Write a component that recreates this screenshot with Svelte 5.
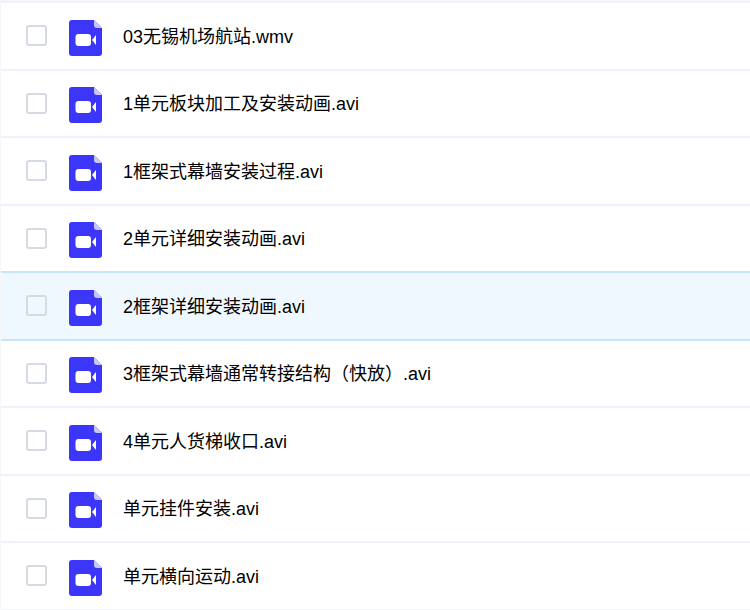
<script>
  const files = [
    '03无锡机场航站.wmv',
    '1单元板块加工及安装动画.avi',
    '1框架式幕墙安装过程.avi',
    '2单元详细安装动画.avi',
    '2框架详细安装动画.avi',
    '3框架式幕墙通常转接结构（快放）.avi',
    '4单元人货梯收口.avi',
    '单元挂件安装.avi',
    '单元横向运动.avi'
  ];
  const activeIndex = 4;
</script>

<ul class="list">
  {#each files as name, i}
    <li class="row" class:active={i === activeIndex}>
      <span class="check"></span>
      <svg class="icon" viewBox="0 0 33 36" width="33" height="36">
        <path d="M3 0H25L33 8V33a3 3 0 0 1-3 3H3a3 3 0 0 1-3-3V3a3 3 0 0 1 3-3Z" fill="#3c36fb" />
        <path d="M25 0L33 8H28a3 3 0 0 1-3-3Z" fill="#c9c7fe" />
        <rect x="6.5" y="14" width="15.5" height="12" rx="3" fill="#fff" />
        <path d="M23 20L27 15V25Z" fill="#fff" />
      </svg>
      <span class="name">{name}</span>
    </li>
  {/each}
</ul>

<style>
  :global(body) {
    background: #fff;
  }

  .list {
    list-style: none;
    margin: 0;
    padding: 1px 0 0 1px;
    width: 750px;
    height: 610px;
    box-sizing: border-box;
    overflow: hidden;
    background: #f5f6f8;
    font-family: "Liberation Sans", "Noto Sans CJK SC", sans-serif;
  }

  .row {
    display: flex;
    align-items: center;
    height: 67.5px;
    box-sizing: border-box;
    padding-left: 25px;
    background: #fff;
    border-top: 2px solid #eef2fb;
    font-size: 18px;
    color: #000;
  }

  .row.active {
    background: #f0f8ff;
    border-top-color: #c8e6fb;
    border-bottom: 2px solid #c8e6fb;
    height: 69.5px;
    margin-bottom: -2px;
    position: relative;
  }

  .check {
    width: 21px;
    height: 21px;
    box-sizing: border-box;
    border: 2px solid #d5dae3;
    border-radius: 3px;
    background: transparent;
  }

  .icon {
    margin: 4px 0 0 22px;
    flex: none;
  }

  .name {
    margin: 0 0 2px 21px;
  }
</style>
